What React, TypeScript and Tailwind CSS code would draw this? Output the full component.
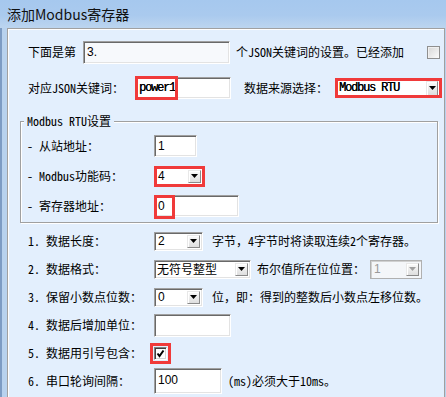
import React from "react";

const sunken =
  "bg-white border border-t-[#a0a0a0] border-l-[#a0a0a0] border-b-white border-r-white shadow-[inset_1px_1px_0_#696969,inset_-1px_-1px_0_#e3e3e3]";
const valFont = "font-[family-name:'Liberation_Sans',sans-serif] text-[12px]";

function Arrow({ disabled = false, big = false }: { disabled?: boolean; big?: boolean }) {
  return (
    <div
      className={
        (big ? "w-[12px] h-[15px] " : "w-[13px] h-[13px] ") +
        "shrink-0 flex items-center justify-center border border-t-[#e8e8e8] border-l-[#e8e8e8] border-b-[#8a8a8a] border-r-[#8a8a8a] bg-[linear-gradient(to_bottom,#fafafa,#dedede)] shadow-[inset_1px_1px_0_#fff]"
      }
    >
      <svg width="7" height="4" viewBox="0 0 7 4">
        <polygon points="0,0 7,0 3.5,4" fill={disabled ? "#a0a0a0" : "#000"} />
      </svg>
    </div>
  );
}

function CheckBoxEmpty() {
  return (
    <div className="w-[13px] h-[13px] shrink-0 border border-[#8f8f8f] bg-[linear-gradient(135deg,#d6d6d6,#fbfbfb)] shadow-[inset_1px_1px_0_#f0f0f0]" />
  );
}

export default function App() {
  return (
    <div className="w-[446px] h-[397px] overflow-hidden flex flex-col bg-[#b8d2ee] text-black font-[family-name:'Noto_Sans_Mono_CJK_SC','Noto_Sans_CJK_SC',monospace] text-[12px] leading-[14px]">
      {/* title bar */}
      <div className="h-[28px] shrink-0 flex items-center pl-[7px] bg-[linear-gradient(to_bottom,#a6c8ee_0%,#aacaee_55%,#bcd5ef_100%)] font-[family-name:'Noto_Sans_CJK_SC',sans-serif] text-[14px] text-[#111]">
        添加Modbus寄存器
      </div>
      {/* body */}
      <div className="flex-1 flex min-h-0 border-l-2 border-[#7d9cc4] pl-[5px] pr-[1px]">
        <div className="flex-1 flex flex-col bg-[#e3effd] border-l border-t border-r border-[#a0a0a0] shadow-[inset_1px_1px_0_#fff]">
          {/* row 1 */}
          <div className="mt-[11px] h-[24px] flex items-center pl-[20px] pr-[4px]">
            <span className="w-[55px] shrink-0">下面是第</span>
            <div className={sunken + " w-[147px] h-[23px] flex items-center pl-[3px] !bg-[#f7f9fc] " + valFont}>3.</div>
            <span className="ml-[6px]">个JSON关键词的设置。已经添加</span>
            <span className="flex-1" />
            <CheckBoxEmpty />
          </div>
          {/* row 2 */}
          <div className="mt-[12px] h-[24px] flex items-center pl-[20px]">
            <span className="w-[107px] shrink-0">对应JSON关键词：</span>
            <div className={sunken + " relative w-[96px] h-[22px] flex items-center pl-[3px]"}>
              <span className="font-[family-name:'Liberation_Mono',monospace] tracking-[-1.2px] text-[12px] [text-shadow:0.3px_0_0_#000]">power1</span>
              <span className="absolute -left-[1px] -top-[2px] w-[43px] h-[24px] border-[3px] border-[#f03a3a] pointer-events-none" />
            </div>
            <span className="ml-[13px]">数据来源选择：</span>
            <div className={sunken + " relative ml-[8px] w-[105px] h-[20px] flex items-center pl-[2px] pr-[2px]"}>
              <span className="flex-1 font-[family-name:'Liberation_Mono',monospace] tracking-[-1.2px] text-[12px] [text-shadow:0.3px_0_0_#000]">Modbus RTU</span>
              <Arrow big />
              <span className="absolute -left-[2px] -right-[2px] -top-[1px] -bottom-[1px] border-[3px] border-[#f03a3a] pointer-events-none" />
            </div>
          </div>
          {/* group box */}
          <div className="relative mt-[21px] ml-[12px] mr-[6px] border border-[#a0a0a0] shadow-[1px_1px_0_#fff,inset_1px_1px_0_#fff] pt-[9px] pb-[1px] pl-[6px]">
            <span className="absolute left-[3px] -top-[8px] px-[3px] bg-[#e3effd] leading-[14px]">Modbus RTU设置</span>
            <div className="h-[30px] flex items-center">
              <span className="w-[127px] shrink-0">- 从站地址：</span>
              <div className={sunken + " w-[43px] h-[22px] flex items-center pl-[3px] " + valFont}>1</div>
            </div>
            <div className="h-[30px] flex items-center">
              <span className="w-[127px] shrink-0">- Modbus功能码：</span>
              <div className={sunken + " relative w-[50px] h-[19px] flex items-center pl-[3px] pr-[2px]"}>
                <span className={"flex-1 " + valFont}>4</span>
                <Arrow />
                <span className="absolute -left-[1px] -right-[2px] -top-[2px] -bottom-[2px] border-[3px] border-[#f03a3a] pointer-events-none" />
              </div>
            </div>
            <div className="h-[30px] flex items-center">
              <span className="w-[127px] shrink-0">- 寄存器地址：</span>
              <div className={sunken + " relative w-[85px] h-[22px] flex items-center pl-[3px] " + valFont}>
                0
                <span className="absolute -left-[1px] -top-[1px] w-[21px] h-[24px] border-[3px] border-[#f03a3a] pointer-events-none" />
              </div>
            </div>
          </div>
          {/* lower rows */}
          <div className="mt-[4px] pl-[20px] flex flex-col">
            <div className="h-[28px] flex items-center">
              <span className="w-[126px] shrink-0">1. 数据长度：</span>
              <div className={sunken + " w-[49px] h-[19px] flex items-center pl-[3px] pr-[2px]"}>
                <span className={"flex-1 " + valFont}>2</span>
                <Arrow />
              </div>
              <span className="ml-[9px]">字节，4字节时将读取连续2个寄存器。</span>
            </div>
            <div className="h-[28px] flex items-center">
              <span className="w-[126px] shrink-0">2. 数据格式：</span>
              <div className={sunken + " w-[97px] h-[19px] flex items-center pl-[2px] pr-[2px]"}>
                <span className="flex-1">无符号整型</span>
                <Arrow />
              </div>
              <span className="ml-[6px]">布尔值所在位位置：</span>
              <div className="ml-[5px] w-[52px] h-[19px] flex items-center pl-[3px] pr-[2px] bg-[#f4f6f9] border border-[#b0b0b0] shadow-[inset_1px_1px_0_#d0d0d0]">
                <span className={"flex-1 text-[#9a9a9a] " + valFont}>1</span>
                <Arrow disabled />
              </div>
            </div>
            <div className="h-[28px] flex items-center">
              <span className="w-[126px] shrink-0">3. 保留小数点位数：</span>
              <div className={sunken + " w-[49px] h-[19px] flex items-center pl-[3px] pr-[2px]"}>
                <span className={"flex-1 " + valFont}>0</span>
                <Arrow />
              </div>
              <span className="ml-[9px]">位，即：得到的整数后小数点左移位数。</span>
            </div>
            <div className="h-[28px] flex items-center">
              <span className="w-[126px] shrink-0">4. 数据后增加单位：</span>
              <div className={sunken + " w-[77px] h-[23px]"} />
            </div>
            <div className="h-[28px] flex items-center">
              <span className="w-[126px] shrink-0">5. 数据用引号包含：</span>
              <div className="relative w-[13px] h-[13px] flex items-center justify-center bg-white border border-t-[#808080] border-l-[#808080] border-b-white border-r-white shadow-[inset_1px_1px_0_#404040,inset_-1px_-1px_0_#d4d4d4]">
                <svg width="9" height="9" viewBox="0 0 9 9">
                  <path d="M1.5 4.5 L3.5 7 L7.5 1.5" stroke="#000" strokeWidth="2" fill="none" />
                </svg>
                <span className="absolute -inset-[5px] border-[3px] border-[#f03a3a] pointer-events-none" />
              </div>
            </div>
            <div className="h-[28px] flex items-center">
              <span className="w-[126px] shrink-0">6. 串口轮询间隔：</span>
              <div className={sunken + " w-[68px] h-[26px] flex items-start pt-[4px] pl-[3px] " + valFont}>100</div>
              <span className="ml-[6px]">(ms)必须大于10ms。</span>
            </div>
          </div>
        </div>
      </div>
    </div>
  );
}
